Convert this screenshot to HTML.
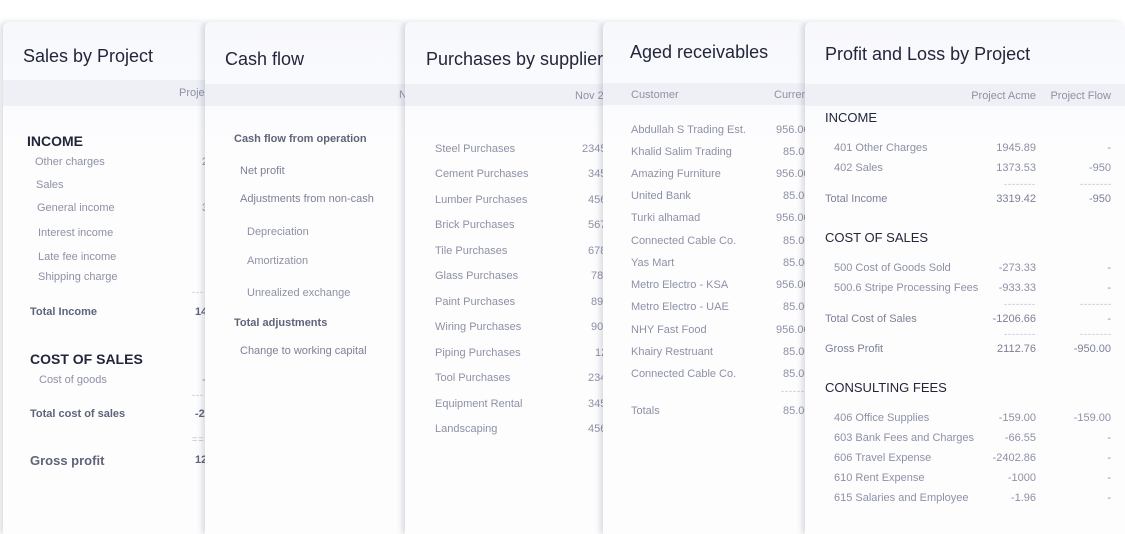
<!DOCTYPE html>
<html><head><meta charset="utf-8"><style>
*{margin:0;padding:0;box-sizing:border-box}
body{width:1125px;height:534px;background:#fff;position:relative;overflow:hidden;font-family:"Liberation Sans",sans-serif}
.c{position:absolute;top:22px;bottom:0;overflow:hidden;background:linear-gradient(#f7f8fc 0,#f9fafd 60px,#fdfdfe 120px,#fdfdfe);box-shadow:-3px 0 6px rgba(60,65,90,.18);border-radius:6px 6px 0 0}
.b{position:absolute;left:0;right:0;background:#eef0f6}
.t{position:absolute;white-space:nowrap;line-height:15px;font-size:11px;color:#8d91a5}
.h{font-size:18px;color:#23263a;line-height:22px}
.s{font-size:14px;font-weight:bold;color:#23263a;line-height:18px}
.s2{font-size:14px;color:#23263a;line-height:18px}
.k{font-weight:bold;color:#5f6479}
.r{text-align:right}
.d{letter-spacing:1px;color:#b5b8c6;font-size:9px}
</style></head><body>

<div class="c" style="left:3px;width:204px">
<div class="b" style="top:58px;height:26px"></div>
<div class="t h" style="left:20px;top:23px">Sales by Project</div>
<div class="t" style="left:176px;top:64px">Proje</div>
<div class="t s" style="left:24px;top:110px">INCOME</div>
<div class="t" style="left:32px;top:133px">Other charges</div><div class="t" style="left:199px;top:133px">2</div>
<div class="t" style="left:33px;top:156px">Sales</div>
<div class="t" style="left:34px;top:179px">General income</div><div class="t" style="left:199px;top:179px">3</div>
<div class="t" style="left:35px;top:204px">Interest income</div>
<div class="t" style="left:35px;top:228px">Late fee income</div>
<div class="t" style="left:35px;top:248px">Shipping charge</div>
<div class="t d" style="left:189px;top:263px">---</div>
<div class="t k" style="left:27px;top:283px">Total Income</div><div class="t k" style="left:192px;top:283px">14</div>
<div class="t s" style="left:27px;top:328px">COST OF SALES</div>
<div class="t" style="left:36px;top:351px">Cost of goods</div><div class="t" style="left:199px;top:351px">-</div>
<div class="t d" style="left:189px;top:366px">---</div>
<div class="t k" style="left:27px;top:385px">Total cost of sales</div><div class="t k" style="left:192px;top:385px">-2</div>
<div class="t d" style="left:189px;top:410px">===</div>
<div class="t k" style="left:27px;top:431px;font-size:13px">Gross profit</div><div class="t k" style="left:192px;top:431px">12</div>
</div>

<div class="c" style="left:205px;width:202px">
<div class="b" style="top:62px;height:22px"></div>
<div class="t h" style="left:20px;top:26px">Cash flow</div>
<div class="t" style="left:194px;top:66px">N</div>
<div class="t k" style="left:29px;top:110px">Cash flow from operation</div>
<div class="t" style="left:35px;top:142px;color:#7d8196">Net profit</div>
<div class="t" style="left:35px;top:170px;color:#7d8196">Adjustments from non-cash</div>
<div class="t" style="left:42px;top:203px">Depreciation</div>
<div class="t" style="left:42px;top:232px">Amortization</div>
<div class="t" style="left:42px;top:264px">Unrealized exchange</div>
<div class="t k" style="left:29px;top:294px">Total adjustments</div>
<div class="t" style="left:35px;top:322px;color:#7d8196">Change to working capital</div>
</div>

<div class="c" style="left:405px;width:200px">
<div class="b" style="top:62px;height:22px"></div>
<div class="t h" style="left:21px;top:26px">Purchases by supplier</div>
<div class="t" style="left:170px;top:67px">Nov 2</div>
<div class="t" style="left:30px;top:120px">Steel Purchases</div><div class="t" style="left:177px;top:120px">2345</div>
<div class="t" style="left:30px;top:145px">Cement Purchases</div><div class="t" style="left:183px;top:145px">345</div>
<div class="t" style="left:30px;top:171px">Lumber Purchases</div><div class="t" style="left:183px;top:171px">456</div>
<div class="t" style="left:30px;top:196px">Brick Purchases</div><div class="t" style="left:183px;top:196px">567</div>
<div class="t" style="left:30px;top:222px">Tile Purchases</div><div class="t" style="left:183px;top:222px">678</div>
<div class="t" style="left:30px;top:247px">Glass Purchases</div><div class="t" style="left:186px;top:247px">789</div>
<div class="t" style="left:30px;top:273px">Paint Purchases</div><div class="t" style="left:186px;top:273px">890</div>
<div class="t" style="left:30px;top:298px">Wiring Purchases</div><div class="t" style="left:186px;top:298px">901</div>
<div class="t" style="left:30px;top:324px">Piping Purchases</div><div class="t" style="left:190px;top:324px">123</div>
<div class="t" style="left:30px;top:349px">Tool Purchases</div><div class="t" style="left:183px;top:349px">234</div>
<div class="t" style="left:30px;top:375px">Equipment Rental</div><div class="t" style="left:183px;top:375px">345</div>
<div class="t" style="left:30px;top:400px">Landscaping</div><div class="t" style="left:183px;top:400px">456</div>
</div>

<div class="c" style="left:603px;width:204px">
<div class="b" style="top:61px;height:22px"></div>
<div class="t h" style="left:27px;top:19px">Aged receivables</div>
<div class="t" style="left:28px;top:66px">Customer</div><div class="t" style="left:171px;top:66px">Current</div>
<div class="t" style="left:28px;top:101px">Abdullah S Trading Est.</div><div class="t" style="left:173px;top:101px">956.00</div>
<div class="t" style="left:28px;top:123px">Khalid Salim Trading</div><div class="t" style="left:180px;top:123px">85.00</div>
<div class="t" style="left:28px;top:145px">Amazing Furniture</div><div class="t" style="left:173px;top:145px">956.00</div>
<div class="t" style="left:28px;top:167px">United Bank</div><div class="t" style="left:180px;top:167px">85.00</div>
<div class="t" style="left:28px;top:189px">Turki alhamad</div><div class="t" style="left:173px;top:189px">956.00</div>
<div class="t" style="left:28px;top:212px">Connected Cable Co.</div><div class="t" style="left:180px;top:212px">85.00</div>
<div class="t" style="left:28px;top:234px">Yas Mart</div><div class="t" style="left:180px;top:234px">85.00</div>
<div class="t" style="left:28px;top:256px">Metro Electro - KSA</div><div class="t" style="left:173px;top:256px">956.00</div>
<div class="t" style="left:28px;top:278px">Metro Electro - UAE</div><div class="t" style="left:180px;top:278px">85.00</div>
<div class="t" style="left:28px;top:301px">NHY Fast Food</div><div class="t" style="left:173px;top:301px">956.00</div>
<div class="t" style="left:28px;top:323px">Khairy Restruant</div><div class="t" style="left:180px;top:323px">85.00</div>
<div class="t" style="left:28px;top:345px">Connected Cable Co.</div><div class="t" style="left:180px;top:345px">85.00</div>
<div class="t d" style="left:178px;top:362px">------</div>
<div class="t" style="left:28px;top:382px">Totals</div><div class="t" style="left:180px;top:382px">85.00</div>
</div>

<div class="c" style="left:805px;width:320px">
<div class="b" style="top:62px;height:22px"></div>
<div class="t h" style="left:20px;top:21px">Profit and Loss by Project</div>
<div class="t r" style="right:89px;top:67px">Project Acme</div>
<div class="t r" style="right:14px;top:67px">Project Flow</div>
<div class="t s2" style="left:20px;top:87px;font-size:13px">INCOME</div>
<div class="t" style="left:29px;top:119px">401 Other Charges</div><div class="t r" style="right:89px;top:119px">1945.89</div><div class="t r" style="right:14px;top:119px">-</div>
<div class="t" style="left:29px;top:139px">402 Sales</div><div class="t r" style="right:89px;top:139px">1373.53</div><div class="t r" style="right:14px;top:139px">-950</div>
<div class="t d r" style="right:89px;top:155px">--------</div><div class="t d r" style="right:13px;top:155px">--------</div>
<div class="t" style="left:20px;top:170px;color:#7d8196">Total Income</div><div class="t r" style="right:89px;top:170px;color:#7d8196">3319.42</div><div class="t r" style="right:14px;top:170px;color:#7d8196">-950</div>
<div class="t s2" style="left:20px;top:207px;font-size:13px">COST OF SALES</div>
<div class="t" style="left:29px;top:239px">500 Cost of Goods Sold</div><div class="t r" style="right:89px;top:239px">-273.33</div><div class="t r" style="right:14px;top:239px">-</div>
<div class="t" style="left:29px;top:259px">500.6 Stripe Processing Fees</div><div class="t r" style="right:89px;top:259px">-933.33</div><div class="t r" style="right:14px;top:259px">-</div>
<div class="t d r" style="right:89px;top:275px">--------</div><div class="t d r" style="right:13px;top:275px">--------</div>
<div class="t" style="left:20px;top:290px;color:#7d8196">Total Cost of Sales</div><div class="t r" style="right:89px;top:290px;color:#7d8196">-1206.66</div><div class="t r" style="right:14px;top:290px">-</div>
<div class="t d r" style="right:89px;top:305px">--------</div><div class="t d r" style="right:13px;top:305px">--------</div>
<div class="t" style="left:20px;top:320px;color:#7d8196">Gross Profit</div><div class="t r" style="right:89px;top:320px;color:#7d8196">2112.76</div><div class="t r" style="right:14px;top:320px;color:#7d8196">-950.00</div>
<div class="t s2" style="left:20px;top:357px;font-size:13px">CONSULTING FEES</div>
<div class="t" style="left:29px;top:389px">406 Office Supplies</div><div class="t r" style="right:89px;top:389px">-159.00</div><div class="t r" style="right:14px;top:389px">-159.00</div>
<div class="t" style="left:29px;top:409px">603 Bank Fees and Charges</div><div class="t r" style="right:89px;top:409px">-66.55</div><div class="t r" style="right:14px;top:409px">-</div>
<div class="t" style="left:29px;top:429px">606 Travel Expense</div><div class="t r" style="right:89px;top:429px">-2402.86</div><div class="t r" style="right:14px;top:429px">-</div>
<div class="t" style="left:29px;top:449px">610 Rent Expense</div><div class="t r" style="right:89px;top:449px">-1000</div><div class="t r" style="right:14px;top:449px">-</div>
<div class="t" style="left:29px;top:469px">615 Salaries and Employee</div><div class="t r" style="right:89px;top:469px">-1.96</div><div class="t r" style="right:14px;top:469px">-</div>
</div>
</body></html>
